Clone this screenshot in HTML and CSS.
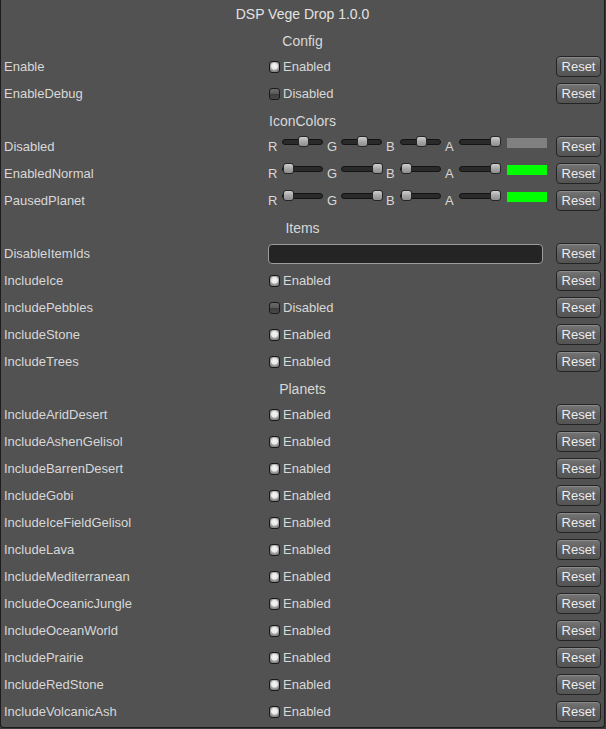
FILE: index.html
```html
<!DOCTYPE html>
<html>
<head>
	<title>DSP Vege Drop 1.0.0</title>
	<link rel="stylesheet" href="styles.css">
</head>
<body>
<div class="window">

	<div class="title">DSP Vege Drop 1.0.0</div>

	<div class="section">Config</div>
	<div class="row"><span class="label">Enable</span><div class="value"><span class="toggle on"></span>Enabled</div><button class="reset">Reset</button></div>
	<div class="row"><span class="label">EnableDebug</span><div class="value"><span class="toggle"></span>Disabled</div><button class="reset">Reset</button></div>

	<div class="section">IconColors</div>
	<div class="row">
		<span class="label">Disabled</span>
		<div class="value colors">
			<span class="ch">R</span><span class="track"><span class="thumb" style="margin-left: 15px"></span></span>
			<span class="ch">G</span><span class="track"><span class="thumb" style="margin-left: 15px"></span></span>
			<span class="ch">B</span><span class="track"><span class="thumb" style="margin-left: 15px"></span></span>
			<span class="ch">A</span><span class="track"><span class="thumb" style="margin-left: 30px"></span></span>
			<span class="swatch" style="background: #808080"></span>
		</div>
		<button class="reset">Reset</button>
	</div>
	<div class="row">
		<span class="label">EnabledNormal</span>
		<div class="value colors">
			<span class="ch">R</span><span class="track"><span class="thumb" style="margin-left: 0px"></span></span>
			<span class="ch">G</span><span class="track"><span class="thumb" style="margin-left: 30px"></span></span>
			<span class="ch">B</span><span class="track"><span class="thumb" style="margin-left: 0px"></span></span>
			<span class="ch">A</span><span class="track"><span class="thumb" style="margin-left: 30px"></span></span>
			<span class="swatch" style="background: #00ff00"></span>
		</div>
		<button class="reset">Reset</button>
	</div>
	<div class="row">
		<span class="label">PausedPlanet</span>
		<div class="value colors">
			<span class="ch">R</span><span class="track"><span class="thumb" style="margin-left: 0px"></span></span>
			<span class="ch">G</span><span class="track"><span class="thumb" style="margin-left: 30px"></span></span>
			<span class="ch">B</span><span class="track"><span class="thumb" style="margin-left: 0px"></span></span>
			<span class="ch">A</span><span class="track"><span class="thumb" style="margin-left: 30px"></span></span>
			<span class="swatch" style="background: #00ff00"></span>
		</div>
		<button class="reset">Reset</button>
	</div>

	<div class="section">Items</div>
	<div class="row"><span class="label">DisableItemIds</span><div class="value"><input class="textbox" type="text" value=""></div><button class="reset">Reset</button></div>
	<div class="row"><span class="label">IncludeIce</span><div class="value"><span class="toggle on"></span>Enabled</div><button class="reset">Reset</button></div>
	<div class="row"><span class="label">IncludePebbles</span><div class="value"><span class="toggle"></span>Disabled</div><button class="reset">Reset</button></div>
	<div class="row"><span class="label">IncludeStone</span><div class="value"><span class="toggle on"></span>Enabled</div><button class="reset">Reset</button></div>
	<div class="row"><span class="label">IncludeTrees</span><div class="value"><span class="toggle on"></span>Enabled</div><button class="reset">Reset</button></div>

	<div class="section">Planets</div>
	<div class="row"><span class="label">IncludeAridDesert</span><div class="value"><span class="toggle on"></span>Enabled</div><button class="reset">Reset</button></div>
	<div class="row"><span class="label">IncludeAshenGelisol</span><div class="value"><span class="toggle on"></span>Enabled</div><button class="reset">Reset</button></div>
	<div class="row"><span class="label">IncludeBarrenDesert</span><div class="value"><span class="toggle on"></span>Enabled</div><button class="reset">Reset</button></div>
	<div class="row"><span class="label">IncludeGobi</span><div class="value"><span class="toggle on"></span>Enabled</div><button class="reset">Reset</button></div>
	<div class="row"><span class="label">IncludeIceFieldGelisol</span><div class="value"><span class="toggle on"></span>Enabled</div><button class="reset">Reset</button></div>
	<div class="row"><span class="label">IncludeLava</span><div class="value"><span class="toggle on"></span>Enabled</div><button class="reset">Reset</button></div>
	<div class="row"><span class="label">IncludeMediterranean</span><div class="value"><span class="toggle on"></span>Enabled</div><button class="reset">Reset</button></div>
	<div class="row"><span class="label">IncludeOceanicJungle</span><div class="value"><span class="toggle on"></span>Enabled</div><button class="reset">Reset</button></div>
	<div class="row"><span class="label">IncludeOceanWorld</span><div class="value"><span class="toggle on"></span>Enabled</div><button class="reset">Reset</button></div>
	<div class="row"><span class="label">IncludePrairie</span><div class="value"><span class="toggle on"></span>Enabled</div><button class="reset">Reset</button></div>
	<div class="row"><span class="label">IncludeRedStone</span><div class="value"><span class="toggle on"></span>Enabled</div><button class="reset">Reset</button></div>
	<div class="row"><span class="label">IncludeVolcanicAsh</span><div class="value"><span class="toggle on"></span>Enabled</div><button class="reset">Reset</button></div>

</div>
</body>
</html>
```

FILE: styles.css
```css
/* Reset */

* { margin: 0; padding: 0; box-sizing: border-box; }

html, body {
	height: 100%;
	background-color: #3a3a3a;
}

body {
	font-family: "Liberation Sans", Arial, sans-serif;
	font-size: 13px;
	color: #d8d8d8;
}


/* Window */

.window {
	width: 605px;
	height: 728px;
	background-color: #525252;
	border: solid 1px #1c1c1c;
	border-top: none;
	border-radius: 0 0 4px 4px;
}

.title {
	height: 27px;
	line-height: 29px;
	text-align: center;
	font-size: 14px;
	color: #e2e2e2;
}

.section {
	height: 26px;
	line-height: 28px;
	text-align: center;
	font-size: 14px;
}


/* Rows */

.row {
	display: grid;
	grid-template-columns: 264px 288px 45px;
	align-items: center;
	height: 27px;
	padding: 0 3px;
}

.label {
	white-space: nowrap;
}

.value {
	display: flex;
	align-items: center;
}


/* Toggle */

.toggle {
	width: 11px;
	height: 12px;
	margin-left: 1px;
	margin-right: 3px;
	border: solid 1px #1a1a1a;
	border-radius: 3px;
	background: linear-gradient(#6c6c6c, #5a5a5a 45%, #3e3e3e 55%, #4a4a4a);
}

.toggle.on {
	background: radial-gradient(circle at 50% 42%, #f6f6f6 0, #e8e8e8 3px, #a4a4a4 4px, #7c7c7c 6px);
}


/* Reset button */

.reset {
	width: 45px;
	height: 21px;
	font-family: "Liberation Sans", Arial, sans-serif;
	font-size: 13px;
	color: #ececec;
	background: linear-gradient(#767676, #5e5e5e 50%, #545454);
	border: solid 1px #242424;
	border-radius: 4px;
	box-shadow: inset 0 1px 0 #8a8a8a;
}


/* Text field */

.textbox {
	width: 275px;
	height: 20px;
	background-color: #242424;
	border: solid 1px #9c9c9c;
	border-radius: 4px;
	color: #d8d8d8;
	font-family: "Liberation Sans", Arial, sans-serif;
	font-size: 13px;
}


/* Colour sliders */

.colors .ch {
	width: 14px;
	margin-bottom: 0px;
}

.colors .track {
	display: flex;
	align-items: center;
	width: 41px;
	height: 6px;
	margin-right: 4px;
	margin-bottom: 10px;
	background-color: #2a2a2a;
	border: solid 1px #141414;
	border-radius: 3px;
}

.colors .thumb {
	flex: none;
	width: 11px;
	height: 11px;
	border: solid 1px #262626;
	border-radius: 3px;
	background: linear-gradient(#cfcfcf, #a8a8a8 50%, #8e8e8e);
}

.colors .swatch {
	width: 40px;
	height: 10px;
	margin-left: 3px;
	margin-bottom: 8px;
}
```
